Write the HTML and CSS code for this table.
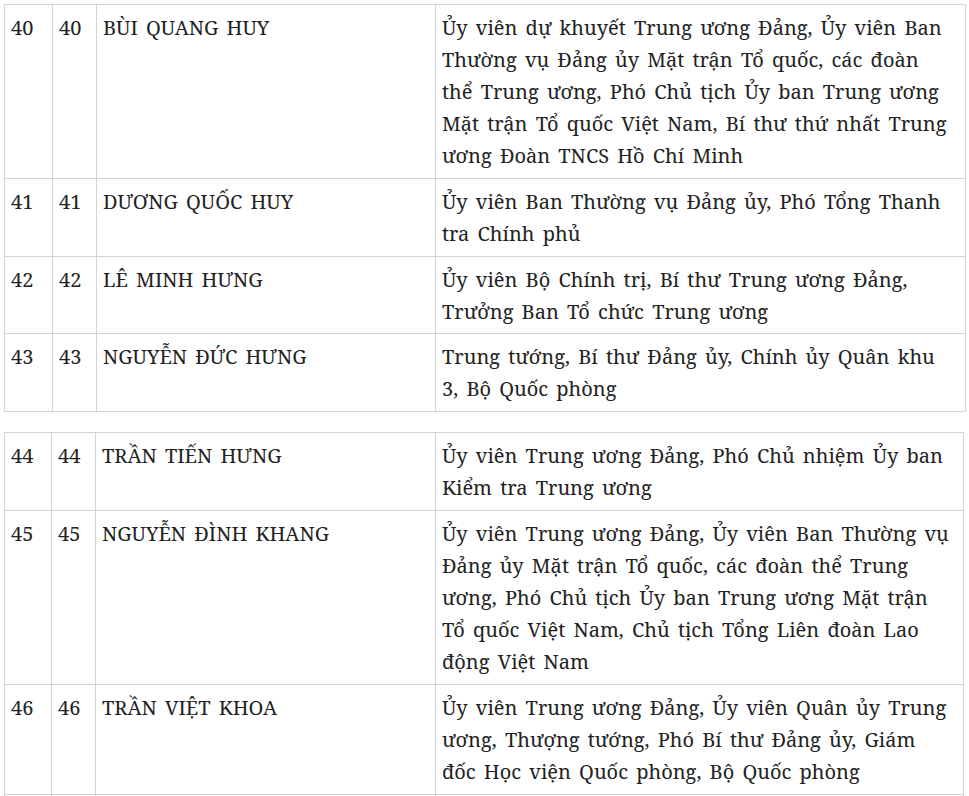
FILE: index.html
```html
<!DOCTYPE html>
<html lang="vi">
<head>
<meta charset="utf-8">
<title>Danh sách</title>
<link rel="stylesheet" href="styles.css">
</head>
<body>
<div class="page">
<table class="list first">
<colgroup><col class="c1"><col class="c2"><col class="c3"><col class="c4"></colgroup>
<tr><td>40</td><td>40</td><td>BÙI QUANG HUY</td><td>Ủy viên dự khuyết Trung ương Đảng, Ủy viên Ban Thường vụ Đảng ủy Mặt trận Tổ quốc, các đoàn thể Trung ương, Phó Chủ tịch Ủy ban Trung ương Mặt trận Tổ quốc Việt Nam, Bí thư thứ nhất Trung ương Đoàn TNCS Hồ Chí Minh</td></tr>
<tr><td>41</td><td>41</td><td>DƯƠNG QUỐC HUY</td><td>Ủy viên Ban Thường vụ Đảng ủy, Phó Tổng Thanh tra Chính phủ</td></tr>
<tr><td>42</td><td>42</td><td>LÊ MINH HƯNG</td><td>Ủy viên Bộ Chính trị, Bí thư Trung ương Đảng, Trưởng Ban Tổ chức Trung ương</td></tr>
<tr><td>43</td><td>43</td><td>NGUYỄN ĐỨC HƯNG</td><td>Trung tướng, Bí thư Đảng ủy, Chính ủy Quân khu 3, Bộ Quốc phòng</td></tr>
</table>
<table class="list second">
<colgroup><col class="c1"><col class="c2"><col class="c3"><col class="c4"></colgroup>
<tr><td>44</td><td>44</td><td>TRẦN TIẾN HƯNG</td><td>Ủy viên Trung ương Đảng, Phó Chủ nhiệm Ủy ban Kiểm tra Trung ương</td></tr>
<tr><td>45</td><td>45</td><td>NGUYỄN ĐÌNH KHANG</td><td>Ủy viên Trung ương Đảng, Ủy viên Ban Thường vụ Đảng ủy Mặt trận Tổ quốc, các đoàn thể Trung ương, Phó Chủ tịch Ủy ban Trung ương Mặt trận Tổ quốc Việt Nam, Chủ tịch Tổng Liên đoàn Lao động Việt Nam</td></tr>
<tr><td>46</td><td>46</td><td>TRẦN VIỆT KHOA</td><td>Ủy viên Trung ương Đảng, Ủy viên Quân ủy Trung ương, Thượng tướng, Phó Bí thư Đảng ủy, Giám đốc Học viện Quốc phòng, Bộ Quốc phòng</td></tr>
<tr><td>&nbsp;</td><td>&nbsp;</td><td>&nbsp;</td><td>&nbsp;</td></tr>
</table>
</div>
</body>
</html>
```
FILE: styles.css
```css
html, body {
  margin: 0;
  padding: 0;
  background: #ffffff;
}
.page {
  padding: 4px 4px 0 4px;
}
.list {
  width: 961px;
  border-collapse: collapse;
  table-layout: fixed;
  font-family: "Noto Serif", "DejaVu Serif", serif;
  font-size: 20px;
  line-height: 32px;
  word-spacing: 3px;
  color: #222222;
}
.first {
  margin-bottom: 20px;
}
.second {
  width: 959px;
}
.list td {
  border: 1px solid #d4d4d4;
  padding: 7px 6px 6px 6px;
  vertical-align: top;
}
.list td:nth-child(4) {
  padding-right: 9px;
}
.first tr:nth-child(3) td {
  padding-bottom: 5px;
}
.c1 { width: 48px; }
.c2 { width: 44px; }
.c3 { width: 339px; }
.c4 { width: 530px; }
.second .c1 { width: 47px; }
.second .c3 { width: 340px; }
.second .c4 { width: 528px; }
```
